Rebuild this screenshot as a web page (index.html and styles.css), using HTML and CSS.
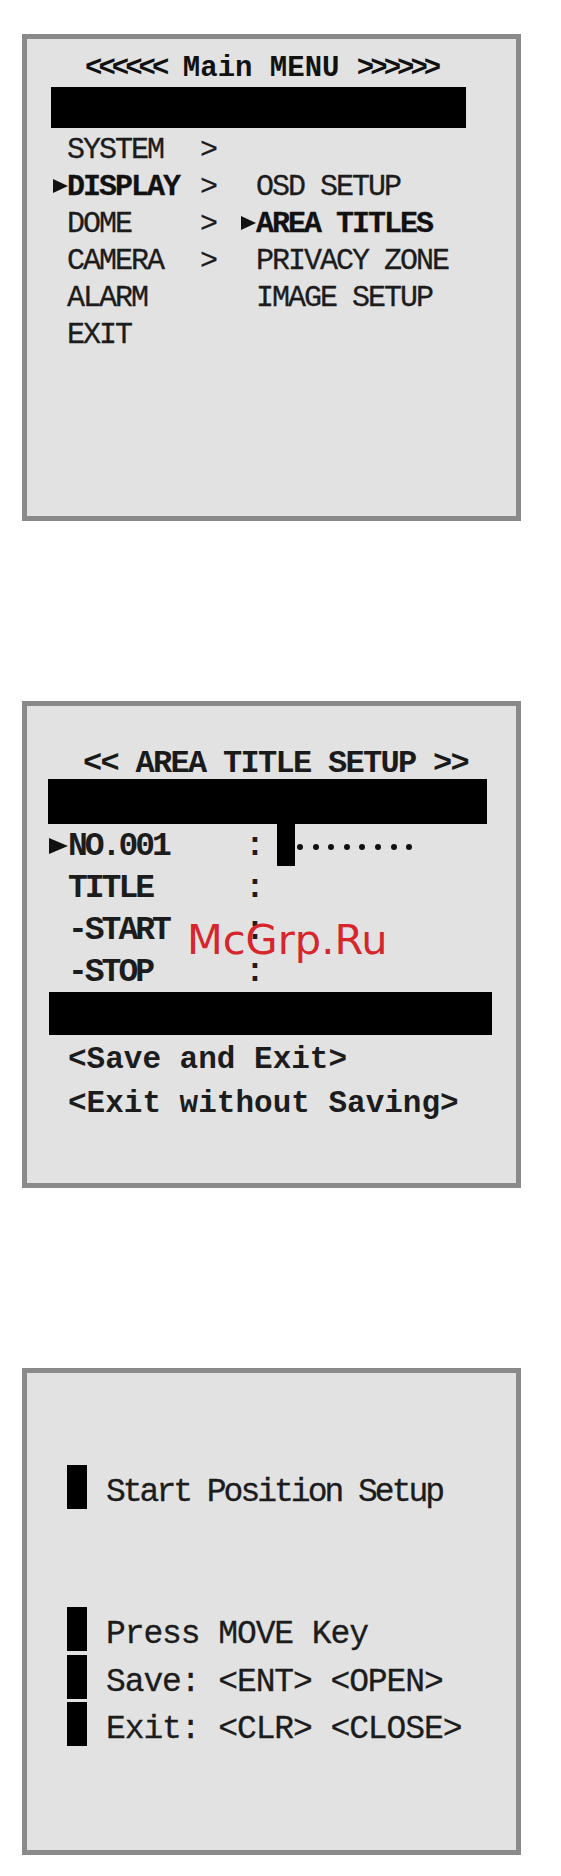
FILE: index.html
```html
<!DOCTYPE html>
<html lang="en">
<head>
  <meta charset="UTF-8">
  <meta name="viewport" content="width=device-width, initial-scale=1.0">
  <title>Dome Camera OSD</title>
  <link rel="stylesheet" href="styles.css">
</head>
<body>

  <!-- Main menu -->
  <div class="osd">
    <h1 class="main-title"><span class="chev">&lt;&lt;&lt;&lt;&lt;&lt;</span> Main MENU <span class="chev">&gt;&gt;&gt;&gt;&gt;&gt;</span></h1>
    <div class="bar bar-main"></div>
    <ul class="menu">
      <li><span class="mark"></span><span class="label">SYSTEM</span><span class="gt">&gt;</span></li>
      <li><span class="mark"><i class="arrow"></i></span><span class="label on">DISPLAY</span><span class="gt">&gt;</span><span class="mark sub-mark"></span><span class="sub">OSD SETUP</span></li>
      <li><span class="mark"></span><span class="label">DOME</span><span class="gt">&gt;</span><span class="mark sub-mark"><i class="arrow"></i></span><span class="sub on">AREA TITLES</span></li>
      <li><span class="mark"></span><span class="label">CAMERA</span><span class="gt">&gt;</span><span class="mark sub-mark"></span><span class="sub">PRIVACY ZONE</span></li>
      <li><span class="mark"></span><span class="label">ALARM</span><span class="gt"></span><span class="mark sub-mark"></span><span class="sub">IMAGE SETUP</span></li>
      <li><span class="mark"></span><span class="label">EXIT</span></li>
    </ul>
  </div>

  <!-- Area title setup -->
  <div class="osd">
    <h2 class="area-title">&lt;&lt; AREA TITLE SETUP &gt;&gt;</h2>
    <div class="bar bar-area"></div>
    <ul class="fields">
      <li>
        <span class="mark field-mark"><i class="arrow arrow-lg"></i></span>
        <span class="field">NO.001</span><span class="colon">:</span>
        <span class="cursor"></span>
        <span class="dots"><i></i><i></i><i></i><i></i><i></i><i></i><i></i><i></i></span>
      </li>
      <li><span class="mark field-mark"></span><span class="field">TITLE</span><span class="colon">:</span></li>
      <li><span class="mark field-mark"></span><span class="field">-START</span><span class="colon">:</span></li>
      <li><span class="mark field-mark"></span><span class="field">-STOP</span><span class="colon">:</span></li>
    </ul>
    <div class="bar bar-save"></div>
    <ul class="actions">
      <li>&lt;Save and Exit&gt;</li>
      <li>&lt;Exit without Saving&gt;</li>
    </ul>
    <span class="stamp">McGrp.Ru</span>
  </div>

  <!-- Start position prompt -->
  <div class="osd">
    <div class="hint">
      <div class="hint-row"><i class="blk"></i><span class="narrow">Start Position Setup</span></div>
      <div class="hint-group">
        <div class="hint-row"><i class="blk"></i><span>Press MOVE Key</span></div>
        <div class="hint-row"><i class="blk"></i><span>Save: &lt;ENT&gt; &lt;OPEN&gt;</span></div>
        <div class="hint-row"><i class="blk"></i><span>Exit: &lt;CLR&gt; &lt;CLOSE&gt;</span></div>
      </div>
    </div>
  </div>

</body>
</html>
```

FILE: styles.css
```css
/* --------------------------------
   Reset / Basic
----------------------------------- */
* {
  margin: 0;
  padding: 0;
  box-sizing: border-box;
}
body {
  background: #fff;
  font-family: "Liberation Mono", "DejaVu Sans Mono", monospace;
  color: #1c1c1c;
  padding: 34px 0 23px 22px;
}
ul {
  list-style: none;
}
i {
  display: block;
}

/* --------------------------------
   OSD screen frame
----------------------------------- */
.osd {
  position: relative;
  width: 499px;
  height: 487px;
  background: #e2e2e2;
  border: 5px solid #8a8a8a;
}
.osd + .osd {
  margin-top: 180px;
}
.bar {
  background: #000;
}
.mark {
  flex: none;
  display: flex;
  align-items: center;
}
.arrow {
  width: 0;
  height: 0;
  border-left: 15px solid #111;
  border-top: 7.5px solid transparent;
  border-bottom: 7.5px solid transparent;
  margin-bottom: 4px;
}
.on {
  font-weight: bold;
  color: #111;
}

/* --------------------------------
   Main menu
----------------------------------- */
.main-title {
  font-size: 29px;
  font-weight: bold;
  line-height: 36px;
  margin-top: 12px;
  padding-left: 58px;
  color: #111;
  white-space: pre;
}
.chev {
  letter-spacing: -4px;
}
.bar-main {
  margin-left: 24px;
  width: 415px;
  height: 41px;
}
.menu {
  margin-top: 4px;
  font-size: 30px;
  letter-spacing: -2px;
  -webkit-text-stroke: 0.3px #1c1c1c;
}
.menu li {
  display: flex;
  height: 37px;
  line-height: 37px;
  padding-left: 26px;
  white-space: pre;
}
.menu .mark {
  width: 14px;
}
.menu .label {
  width: 133px;
  flex: none;
}
.menu .gt {
  width: 41px;
  flex: none;
}
.menu .sub-mark {
  width: 15px;
}

/* --------------------------------
   Area title setup
----------------------------------- */
.area-title {
  font-size: 32px;
  letter-spacing: -1.7px;
  line-height: 31px;
  margin-top: 42px;
  padding-left: 56px;
  color: #1a1a1a;
  white-space: pre;
}
.bar-area {
  margin-left: 21px;
  width: 439px;
  height: 45px;
}
.fields {
  font-size: 33px;
  font-weight: bold;
  letter-spacing: -3px;
}
.fields li {
  display: flex;
  height: 42px;
  padding: 3px 0 0 22px;
  line-height: 39px;
}
.field-mark {
  width: 19px;
}
.arrow-lg {
  border-left-width: 19px;
  border-top-width: 8px;
  border-bottom-width: 8px;
  margin-bottom: 2px;
}
.field {
  width: 177px;
  flex: none;
}
.colon {
  width: 32px;
  flex: none;
}
.cursor {
  width: 18px;
  height: 42px;
  margin-top: -3px;
  background: #000;
}
.dots {
  display: flex;
  align-items: center;
  gap: 9.6px;
  margin-left: 2px;
}
.dots i {
  width: 6px;
  height: 6px;
  border-radius: 50%;
  background: #111;
}
.bar-save {
  margin-left: 22px;
  width: 443px;
  height: 43px;
}
.actions {
  font-size: 31px;
  font-weight: bold;
  line-height: 43.5px;
  padding: 3px 0 0 41px;
}
.actions li {
  white-space: pre;
}

/* red site stamp over the screen */
.stamp {
  position: absolute;
  left: 160px;
  top: 213px;
  font-family: "DejaVu Sans", sans-serif;
  font-size: 41.5px;
  line-height: 1;
  color: #d6262b;
}

/* --------------------------------
   Start position prompt
----------------------------------- */
.hint {
  padding: 92px 0 0 40px;
  font-size: 33px;
  letter-spacing: -1.1px;
  -webkit-text-stroke: 0.3px #1c1c1c;
}
.hint-row {
  display: flex;
  height: 44px;
}
.hint-group {
  margin-top: 98px;
  display: flex;
  flex-direction: column;
  gap: 3.5px;
}
.blk {
  flex: none;
  width: 20px;
  height: 44px;
  background: #000;
}
.hint-row span {
  margin: 11px 0 0 19px;
  line-height: 33px;
  white-space: pre;
}
.hint-row .narrow {
  letter-spacing: -3px;
}
```
